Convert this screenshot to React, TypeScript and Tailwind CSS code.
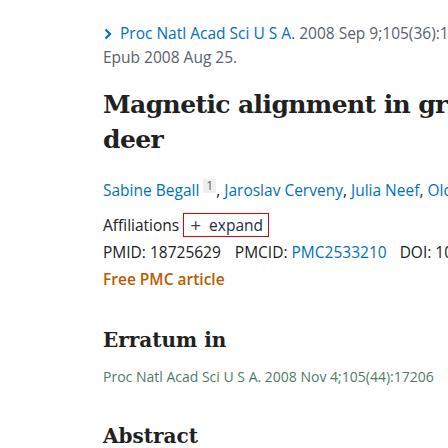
import React from "react";

export default function App() {
  const sans = { fontFamily: '"Open Sans", "Noto Sans", sans-serif' };
  const serif = { fontFamily: '"DejaVu Serif", "Liberation Serif", serif' };
  return (
    <div className="w-[448px] h-[448px] overflow-hidden bg-white">
      <div className="pl-[103px] pt-[21px] whitespace-nowrap" style={sans}>
        <div className="text-[15.5px] leading-[24px] text-[#5b616b]">
          <div className="flex items-center">
            <svg width="10" height="14" viewBox="0 0 10 14" className="shrink-0 mr-[7px] mt-[1px]">
              <path d="M2.5 2.5 L7 7 L2.5 11.5" stroke="#0071bc" strokeWidth="2.2" fill="none" />
            </svg>
            <span className="text-[#0071bc]">Proc Natl Acad Sci U S A.</span>
            <span>&nbsp;2008 Sep 9;105(36):13451-5.</span>
          </div>
          <div>Epub 2008 Aug 25.</div>
        </div>

        <h1
          className="mt-[18px] text-[25px] leading-[35px] tracking-[-0.6px] font-bold text-[#212121]"
          style={serif}
        >
          Magnetic alignment in grazing and resting cattle and
          <br />
          deer
        </h1>

        <div className="mt-[21px] text-[15.5px] leading-[24px] text-[#0071bc]">
          Sabine Begall{" "}
          <span className="inline-block align-top text-[12px] leading-[14px] text-[#5b616b] bg-[#efefef] px-[3px] mt-[1px]">1</span>
          <span className="text-[#212121]">, </span>Jaroslav Cerveny<span className="text-[#212121]">, </span>Julia Neef<span className="text-[#212121]">, </span>Oldrich Vojtech
        </div>

        <div className="mt-[11px] flex items-center text-[15.5px] leading-[24px] text-[#212121]">
          <span>Affiliations</span>
          <span className="shrink-0 ml-[4px] border-[1.5px] border-[#e00000] h-[24px] w-[86px] flex items-center pl-[6px] text-[#212f45]">
            <span className="text-[19px] leading-[20px] text-[#444] mr-[8px] -mt-[1px]">+</span>
            <span className="-mt-[1px]">expand</span>
          </span>
        </div>

        <div className="mt-[3px] text-[15.5px] leading-[24px] text-[#212121]">
          PMID: 18725629
          <span className="ml-[14px]">PMCID: </span>
          <span className="text-[#0071bc]">PMC2533210</span>
          <span className="ml-[13px]">DOI: 10.1073/pnas.0803650105</span>
        </div>

        <div className="mt-[3px] text-[15.5px] leading-[24px] font-semibold text-[#b85c00]">
          Free PMC article
        </div>

        <h2 className="mt-[34px] text-[20px] leading-[30px] font-bold text-[#212121]" style={serif}>
          Erratum in
        </h2>

        <div className="mt-[12px] text-[14px] leading-[20px] text-[#4f7a68]">
          Proc Natl Acad Sci U S A. 2008 Nov 4;105(44):17206
        </div>

        <h2 className="mt-[34px] text-[20px] leading-[30px] font-bold text-[#212121]" style={serif}>
          Abstract
        </h2>
      </div>
    </div>
  );
}
